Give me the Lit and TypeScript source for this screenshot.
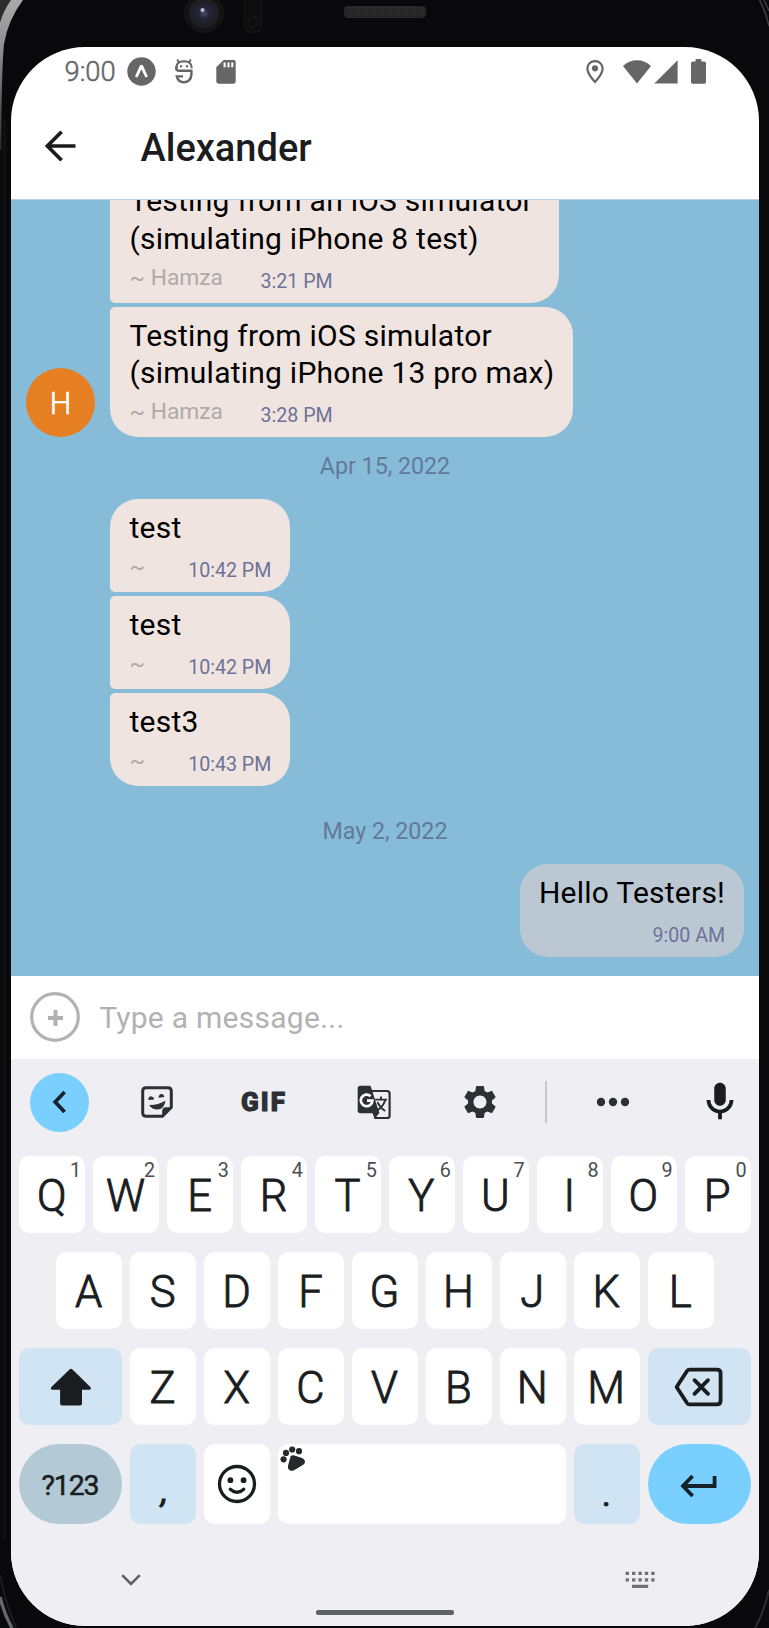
import { LitElement, html, css, svg, nothing } from "lit";
import { customElement, property } from "lit/decorators.js";
import { classMap } from "lit/directives/class-map.js";

interface Message {
  lines: string[];
  author?: string;
  time: string;
  joinTop?: boolean;
  joinBottom?: boolean;
  wrapped?: boolean;
  avatar?: string;
  mine?: boolean;
}

interface Day {
  label?: string;
  messages: Message[];
}

const days: Day[] = [
  {
    messages: [
      {
        lines: ["Testing from an iOS simulator", "(simulating iPhone 8 test)"],
        author: "~ Hamza",
        time: "3:21 PM",
        joinTop: true,
        joinBottom: true,
        wrapped: true,
      },
      {
        lines: ["Testing from iOS simulator", "(simulating iPhone 13 pro max)"],
        author: "~ Hamza",
        time: "3:28 PM",
        joinTop: true,
        avatar: "H",
      },
    ],
  },
  {
    label: "Apr 15, 2022",
    messages: [
      { lines: ["test"], author: "~ ", time: "10:42 PM", joinBottom: true },
      { lines: ["test"], author: "~ ", time: "10:42 PM", joinTop: true, joinBottom: true },
      { lines: ["test3"], author: "~ ", time: "10:43 PM", joinTop: true },
    ],
  },
  {
    label: "May 2, 2022",
    messages: [{ lines: ["Hello Testers!"], time: "9:00 AM", mine: true }],
  },
];

@customElement("status-bar")
export class StatusBar extends LitElement {
  static styles = css`
    :host { display: flex; align-items: center; height: 49px; padding: 0 53px 0 53.5px; color: #666; }
    .clock { font-size: 27.3px; line-height: 32px; font-weight: 300; -webkit-text-stroke: 0.5px #666; width: 62.5px; padding-top: 1.5px; }
    svg { display: block; flex: none; }
    .bridge { margin-left: 19px; }
    .card { margin-left: 23px; }
    .grow { flex: 1; }
    .wifi { margin-left: 19px; }
    .signal { margin-left: 3px; }
    .battery { margin-left: 13.5px; }
  `;
  render() {
    return html`
      <span class="clock">9:00</span>
      <svg width="29" height="29" viewBox="0 0 29 29">
        <circle cx="14.5" cy="14.5" r="14.2" fill="#666" />
        <path d="M8 19.6 L12.7 8.8 Q14.4 6.6 16.1 8.8 L20.9 19.6 L18.4 20.6 L14.4 12.2 L10.4 20.6Z" fill="#fff" />
      </svg>
      <svg class="bridge" width="18" height="25" viewBox="0 0 18 25" fill="none" stroke="#666">
        <path d="M1.4 11.6 V8 Q1.6 2.4 9 2.2 Q16.3 2.4 16.6 8 V9.2" stroke-width="2.1" />
        <path d="M2.2 .5 L4 3.6 M15.8 .5 L14 3.6" stroke-width="1.9" />
        <path d="M1.4 7 V9 Q1.4 11.7 4 11.7 H16.4 V16 Q15.6 22.9 9 23.2 Q3 22.9 1.8 17.4 H8" stroke-width="2.4" />
        <circle cx="6" cy="7.3" r="1.2" fill="#666" stroke="none" />
        <circle cx="12" cy="7.3" r="1.2" fill="#666" stroke="none" />
      </svg>
      <svg class="card" width="20" height="24" viewBox="0 0 20 24">
        <path d="M7.5 0 H17.6 Q19.7 0 19.7 2.1 V21.6 Q19.7 23.7 17.6 23.7 H2.4 Q.3 23.7 .3 21.6 V7.2Z" fill="#666" />
        <path d="M8.6 2.4V7.2M12.5 2.4V7.2M16.3 2.4V7.2" stroke="#fff" stroke-width="2.1" />
      </svg>
      <span class="grow"></span>
      <svg width="18" height="24" viewBox="0 0 18 24">
        <path d="M9 1.2 C4.6 1.2 1.4 4.4 1.4 8.6 C1.4 14 9 22 9 22 S16.6 14 16.6 8.6 C16.6 4.4 13.4 1.2 9 1.2Z" fill="none" stroke="#666" stroke-width="2.2" />
        <circle cx="9" cy="8.3" r="3.1" fill="#666" />
      </svg>
      <svg class="wifi" width="28" height="24" viewBox="0 0 28 24">
        <path d="M14 23.6 L0 6.1 Q6 .3 14 .3 T28 6.1Z" fill="#666" />
      </svg>
      <svg class="signal" width="24" height="24" viewBox="0 0 24 24">
        <path d="M23.6 .3 V23.6 H.3Z" fill="#666" />
      </svg>
      <svg class="battery" width="15" height="25" viewBox="0 0 15 25">
        <path d="M4.6 0 H10.4 V2.4 H13.3 Q15 2.4 15 4.1 V23 Q15 24.7 13.3 24.7 H1.7 Q0 24.7 0 23 V4.1 Q0 2.4 1.7 2.4 H4.6Z" fill="#666" />
      </svg>
    `;
  }
}

@customElement("chat-header")
export class ChatHeader extends LitElement {
  @property() name = "";
  static styles = css`
    :host { display: flex; align-items: center; height: 103px; box-sizing: border-box; padding: 0 0 3px 34px; }
    svg { display: block; margin-right: 64.5px; }
    .name { font-size: 38px; line-height: 46px; font-weight: 500; color: #1c1c1e; padding-top: 4px; }
  `;
  render() {
    return html`
      <svg width="31" height="32" viewBox="0 0 31 32" fill="none" stroke="#1c1c1e" stroke-width="3.7">
        <path d="M30.5 16 H3 M16.6 1.8 L2.4 16 L16.6 30.2" />
      </svg>
      <span class="name">${this.name}</span>
    `;
  }
}

@customElement("chat-message")
export class ChatMessage extends LitElement {
  @property({ attribute: false }) message!: Message;
  static styles = css`
    :host { display: block; }
    .row { display: flex; align-items: flex-end; }
    .row.mine { justify-content: flex-end; }
    .slot { width: 69px; margin-right: 15px; flex: none; }
    .avatar { height: 69px; border-radius: 50%; background: #e67e22; color: #fff; font-size: 30.5px; font-weight: 300; -webkit-text-stroke: 0.6px #fff; line-height: 72px; text-align: center; }
    .bubble { background: #f0e4e0; border-radius: 28px; padding: 10.3px 18.9px 0 19.5px; color: #000; }
    .wrapped { min-width: 411px; }
    .mine .bubble { background: #bbc8d4; padding-left: 19.2px; }
    .join-top { border-top-left-radius: 5px; }
    .join-bottom { border-bottom-left-radius: 5px; }
    .line { font-size: 30px; line-height: 37.5px; letter-spacing: 0.24px; white-space: nowrap; }
    .meta { display: flex; gap: 37.5px; height: 45.5px; box-sizing: border-box; padding-top: 7.5px; }
    .mine .meta { justify-content: flex-end; }
    .author { font-size: 22.8px; line-height: 26px; color: #afaaaa; white-space: pre; }
    .time { font-size: 19.6px; line-height: 22px; margin-top: 5.8px; color: #6b7399; white-space: nowrap; }
  `;
  render() {
    const m = this.message;
    return html`
      <div class=${classMap({ row: true, mine: !!m.mine })}>
        ${m.mine
          ? nothing
          : html`<div class="slot">${m.avatar ? html`<div class="avatar">${m.avatar}</div>` : nothing}</div>`}
        <div class=${classMap({ bubble: true, wrapped: !!m.wrapped, "join-top": !!m.joinTop, "join-bottom": !!m.joinBottom })}>
          ${m.lines.map((l) => html`<div class="line">${l}</div>`)}
          <div class="meta">
            ${m.author ? html`<span class="author">${m.author}</span>` : nothing}
            <span class="time">${m.time}</span>
          </div>
        </div>
      </div>
    `;
  }
}

@customElement("chat-thread")
export class ChatThread extends LitElement {
  static styles = css`
    :host { display: flex; flex-direction: column; justify-content: flex-end; height: 777px; box-sizing: border-box; padding: 0 15px 18.6px; overflow: hidden; background: #87bcd8; border-top: 1px solid #b4d3e3; }
    .day { display: flex; flex-direction: column; gap: 3.7px; flex: none; }
    .date { font-size: 23.2px; line-height: 28px; text-align: center; color: #62799c; padding: 14.9px 0 15.1px; }
    .day:last-child .date { padding-top: 31px; }
  `;
  render() {
    return days.map(
      (d) => html`<div class="day">
        ${d.label ? html`<div class="date">${d.label}</div>` : nothing}
        ${d.messages.map((m) => html`<chat-message .message=${m}></chat-message>`)}
      </div>`
    );
  }
}

@customElement("message-composer")
export class MessageComposer extends LitElement {
  static styles = css`
    :host { display: flex; align-items: center; height: 83px; box-sizing: border-box; padding: 0 19px 2px; background: #fff; }
    svg { display: block; margin-right: 19.2px; }
    .hint { font-size: 30px; line-height: 38px; letter-spacing: 0.26px; color: #b2b2b2; padding-top: 2px; }
  `;
  render() {
    return html`
      <svg width="50" height="50" viewBox="0 0 50 50" fill="none" stroke="#b2b2b2">
        <circle cx="25" cy="25" r="23.3" stroke-width="3.2" />
        <path d="M18 26 H33 M25.5 18 V34" stroke-width="4" />
      </svg>
      <span class="hint">Type a message...</span>
    `;
  }
}

const icons = {
  shift: svg`<svg width="42" height="38" viewBox="0 0 42 38"><path d="M19.8 1.3 Q21 .2 22.2 1.3 L40.6 19.3 Q41.6 21.6 39.4 21.8 H32 V35.6 Q32 37.5 30.1 37.5 H12 Q10.1 37.5 10.1 35.6 V21.8 H2.2 Q.2 21.6 1.2 19.3Z" fill="#1a1d20"/></svg>`,
  back: svg`<svg width="50" height="40" viewBox="0 0 50 40" fill="none" stroke="#1a1d20" stroke-width="3.8" stroke-linejoin="round"><path d="M15.5 2.6 H43 Q46.6 2.6 46.6 6.2 V33.8 Q46.6 37.4 43 37.4 H15.5 Q14 37.4 13 36 L2.6 20 L13 4 Q14 2.6 15.5 2.6Z"/><path d="M20.5 13.2 L34 26.8 M34 13.2 L20.5 26.8" stroke-linecap="round"/></svg>`,
  smile: svg`<svg width="40" height="40" viewBox="0 0 40 40" fill="none" stroke="#1a1d20"><circle cx="20" cy="20" r="17.5" stroke-width="3.3"/><circle cx="13.4" cy="16.2" r="2.9" fill="#1a1d20" stroke="none"/><circle cx="26.6" cy="16.2" r="2.9" fill="#1a1d20" stroke="none"/><path d="M13.3 25.2 Q20 31.4 26.7 25.2" stroke-width="3.3" stroke-linecap="round"/></svg>`,
  paw: svg`<svg width="26" height="26" viewBox="0 0 26 26" fill="#26282b"><circle cx="3.6" cy="13.3" r="3.1"/><circle cx="6" cy="6.9" r="3.1"/><circle cx="12.2" cy="3.5" r="3.1"/><circle cx="19" cy="5.2" r="3.1"/><path d="M10.5 10.6 Q12 8.8 14.5 9.6 L22 12 Q25.5 13.6 24.9 16.8 Q24.4 18.6 22 19.6 L13.5 24.4 Q10.5 25.6 8.8 23.6 Q7.6 22.2 8 19.8Z"/></svg>`,
  enter: svg`<svg width="38" height="24" viewBox="0 0 38 24" fill="none" stroke="#14222b" stroke-width="3.8"><path d="M34.6 2 V12 H4 M12.6 2 L3 12 L12.6 22"/></svg>`,
};

@customElement("key-cap")
export class KeyCap extends LitElement {
  @property() label = "";
  @property() hint = "";
  @property() icon = "";
  @property() kind = "";
  static styles = css`
    :host { display: block; }
    .key { height: 100%; box-sizing: border-box; display: grid; grid-template: 100% / 100%; border-radius: 10.5px; background: #fff; color: #1a1d20; }
    .key > * { grid-area: 1 / 1; place-self: center; }
    .label { font-size: 43.6px; line-height: 52px; font-weight: 300; -webkit-text-stroke: 0.9px #1a1d20; padding: 5px 1px 0 0; }
    .hinted .label { padding-top: 5px; }
    .hint { place-self: start end; font-size: 19.8px; line-height: 22px; color: #4c4e51; padding: 3.8px 4px 0 0; }
    .tint { background: #d1e4f3; }
    .pill { border-radius: 40px; }
    .grey { background: #b3c9d6; }
    .blue { background: #79d0ff; }
    .grey .label { font-size: 28.5px; font-weight: 400; -webkit-text-stroke: 0.5px #1a1d20; letter-spacing: -1.2px; line-height: 36px; padding-top: 3px; }
    .punct .label { font-size: 34px; padding-top: 20px; font-weight: 400; }
    .comma .label { font-style: italic; padding: 14px 0 0 3px; }
    .space > svg { place-self: start; margin: 2px 0 0 2px; }
    .blue > svg { margin-top: 3px; }
    svg { display: block; }
  `;
  render() {
    const cls: Record<string, boolean> = { key: true, hinted: !!this.hint };
    for (const k of this.kind.split(" ")) if (k) cls[k] = true;
    return html`<div class=${classMap(cls)}>
      ${this.label ? html`<span class="label">${this.label}</span>` : nothing}
      ${this.hint ? html`<span class="hint">${this.hint}</span>` : nothing}
      ${this.icon ? (icons as any)[this.icon] : nothing}
    </div>`;
  }
}

@customElement("soft-keyboard")
export class SoftKeyboard extends LitElement {
  static styles = css`
    :host { display: block; height: 567px; background: #eeeef3; }
    svg { display: block; }
    .tools { display: grid; grid-template-columns: 97px 98px 115px 105px 108px 23px 112px 1fr; height: 86px; margin-bottom: 11px; align-items: center; justify-items: center; }
    .collapse { width: 59px; height: 59px; border-radius: 50%; background: #79d0ff; display: grid; place-items: center; }
    .gif { font-size: 26px; line-height: 30px; font-weight: 900; letter-spacing: 2px; color: #2e2f34; -webkit-text-stroke: 1px #2e2f34; padding-left: 1px; }
    .rule { width: 2px; height: 42px; background: #c6c7cb; }
    .mic { margin-left: 12px; }
    .keys { display: grid; grid-template-rows: 77px 77px 77px 80px; row-gap: 19px; padding: 0 9.4px 0 8px; }
    .row { display: flex; gap: 8.15px; justify-content: center; }
    .row > * { flex: none; width: 65.8px; }
    .row > .wide { width: 102.9px; }
    .row > .bar { width: 287.9px; }
    .nav { display: flex; align-items: center; justify-content: space-between; height: 20px; padding: 0 104.5px 0 110px; margin-top: 46px; }
    .home { width: 138px; height: 4.5px; border-radius: 2px; background: #606164; margin: 20px auto 0; }
  `;
  render() {
    return html`
      <div class="tools">
        <div class="collapse">
          <svg width="16" height="24" viewBox="0 0 16 24" fill="none" stroke="#17252e" stroke-width="3.8"><path d="M12.6 2 L3.2 12 L12.6 22" /></svg>
        </div>
        <svg width="34" height="34" viewBox="0 0 34 34" fill="none" stroke="#2e2f34" stroke-width="3">
          <path d="M6 2.7 H28 Q31.3 2.7 31.3 6 V22.4 L22.4 31.3 H6 Q2.7 31.3 2.7 28 V6 Q2.7 2.7 6 2.7Z" />
          <path d="M22.2 31.5 V26 Q22.2 22.2 26 22.2 H31.5Z" fill="#2e2f34" stroke="none" />
          <path d="M8.2 15 Q8.8 10.8 11.6 11.4 Q14.2 11.8 14.2 14.4Z M18.4 12.8 Q19 8.6 21.8 9 Q24.4 9.4 24.4 12Z" fill="#2e2f34" stroke="none" />
          <path d="M9.2 20 Q18 20.2 25.4 15.8 Q24.6 23.8 18 24.6 Q12 24.8 9.2 20Z" fill="#2e2f34" stroke="none" />
        </svg>
        <span class="gif">GIF</span>
        <svg width="34" height="35" viewBox="0 0 34 35" fill="none">
          <path d="M14 6 H30 Q32.6 6 32.6 8.6 V30.4 Q32.6 33 30 33 H18.5Z" stroke="#2e2f34" stroke-width="2.2" />
          <path d="M3.5 .8 H13.5 L22.4 28.3 H3.5 Q.7 28.3 .7 25.5 V3.6 Q.7 .8 3.5 .8Z" fill="#2e2f34" />
          <path d="M15.5 28 H22.3 L17.6 33.8Z" fill="#2e2f34" />
          <path d="M13.6 11.2 A5.8 5.8 0 1 0 15.4 15.6 H10" stroke="#fff" stroke-width="2.7" />
          <path d="M18.2 14.6 H30 M24 11.6 V14.6 M28.4 14.6 Q26.6 21.4 20.4 25.4 M20.4 17.2 Q23.2 23 28.2 26" stroke="#2e2f34" stroke-width="1.9" />
        </svg>
        <svg width="40" height="40" viewBox="0 0 24 24" fill="#2e2f34">
          <path d="M19.14 12.94c.04-.3.06-.61.06-.94s-.02-.64-.07-.94l2.03-1.58c.18-.14.23-.41.12-.61l-1.92-3.32c-.12-.22-.37-.29-.59-.22l-2.39.96c-.5-.38-1.03-.7-1.62-.94l-.36-2.54c-.04-.24-.24-.41-.48-.41h-3.84c-.24 0-.43.17-.47.41l-.36 2.54c-.59.24-1.13.57-1.62.94l-2.39-.96c-.22-.08-.47 0-.59.22L2.74 8.87c-.12.21-.08.47.12.61l2.03 1.58c-.05.3-.09.63-.09.94s.02.64.07.94l-2.03 1.58c-.18.14-.23.41-.12.61l1.92 3.32c.12.22.37.29.59.22l2.39-.96c.5.38 1.03.7 1.62.94l.36 2.54c.05.24.24.41.48.41h3.84c.24 0 .44-.17.47-.41l.36-2.54c.59-.24 1.13-.56 1.62-.94l2.39.96c.22.08.47 0 .59-.22l1.92-3.32c.12-.22.07-.47-.12-.61l-2.01-1.58zM12 15.9c-2.15 0-3.9-1.75-3.9-3.9s1.75-3.9 3.9-3.9 3.9 1.75 3.9 3.9-1.75 3.9-3.9 3.9z" />
        </svg>
        <span class="rule"></span>
        <svg width="34" height="10" viewBox="0 0 34 10" fill="#2e2f34"><circle cx="5" cy="5" r="4.2" /><circle cx="17" cy="5" r="4.2" /><circle cx="29" cy="5" r="4.2" /></svg>
        <svg class="mic" width="46" height="46" viewBox="0 0 24 24" fill="#1a1d20">
          <path d="M12 14c1.66 0 3-1.34 3-3V5c0-1.66-1.34-3-3-3S9 3.34 9 5v6c0 1.66 1.34 3 3 3zm5-3c0 2.76-2.24 5-5 5s-5-2.24-5-5H5c0 3.53 2.61 6.43 6 6.92V21h2v-3.08c3.39-.49 6-3.39 6-6.92h-2z" />
        </svg>
      </div>
      <div class="keys">
        <div class="row">${[..."QWERTYUIOP"].map((k, i) => html`<key-cap label=${k} hint=${String((i + 1) % 10)}></key-cap>`)}</div>
        <div class="row">${[..."ASDFGHJKL"].map((k) => html`<key-cap label=${k}></key-cap>`)}</div>
        <div class="row">
          <key-cap class="wide" kind="tint" icon="shift"></key-cap>
          ${[..."ZXCVBNM"].map((k) => html`<key-cap label=${k}></key-cap>`)}
          <key-cap class="wide" kind="tint" icon="back"></key-cap>
        </div>
        <div class="row">
          <key-cap class="wide" kind="pill grey" label="?123"></key-cap>
          <key-cap kind="tint punct comma" label=","></key-cap>
          <key-cap icon="smile"></key-cap>
          <key-cap class="bar" kind="space" icon="paw"></key-cap>
          <key-cap kind="tint punct" label="."></key-cap>
          <key-cap class="wide" kind="pill blue" icon="enter"></key-cap>
        </div>
      </div>
      <div class="nav">
        <svg width="20" height="14" viewBox="0 0 20 14" fill="none" stroke="#606164" stroke-width="2.6"><path d="M1.2 2.2 L10 11 L18.8 2.2" /></svg>
        <svg width="30" height="18" viewBox="0 0 30 18" fill="none" stroke="#707174" stroke-width="3.2">
          <path d="M.6 2.4 H30 M.6 8.8 H30" stroke-dasharray="3.4 3" />
          <path d="M7 15.4 H23.2" />
        </svg>
      </div>
      <div class="home"></div>
    `;
  }
}

@customElement("device-bezel")
export class DeviceBezel extends LitElement {
  static styles = css`
    :host { display: block; }
    svg { display: block; }
  `;
  render() {
    return html`
      <svg width="769" height="1628" viewBox="0 0 769 1628" fill="none">
        <defs>
          <linearGradient id="rim" x1="0" y1="0" x2="0" y2="1">
            <stop offset="0" stop-color="#a9a9a9" />
            <stop offset="0.35" stop-color="#8c8c8c" />
            <stop offset="1" stop-color="#2a2b30" />
          </linearGradient>
          <radialGradient id="lens">
            <stop offset="0" stop-color="#4c4a6c" />
            <stop offset="0.4" stop-color="#252338" />
            <stop offset="1" stop-color="#1c1c1e" />
          </radialGradient>
          <pattern id="mesh" width="2" height="2" patternUnits="userSpaceOnUse">
            <rect width="2" height="2" fill="#2c2c2c" />
            <rect width="1" height="1" fill="#191919" />
          </pattern>
        </defs>
        <rect width="769" height="1628" fill="#09090b" />
        <path d="M0 0 H12 L0 20Z" fill="#2c2c2c" />
        <path d="M11 0 H23 Q8 20 4 44 Q1.6 66 1.2 150 H0 V22 Q4 10 11 0Z" fill="url(#rim)" />
        <path d="M4.5 120 V1540" stroke="#100f12" stroke-width="4" />
        <path d="M759.5 0 Q766 12 769 26 M764 0 L769 11" stroke="#3c3c3e" stroke-width="1.6" />
        <path d="M0 1597 Q4 1614 12 1628" stroke="#66686c" stroke-width="3.4" />
        <path d="M0 1575 Q6 1606 16 1628" stroke="#1c1d22" stroke-width="2" />
        <path d="M769 1590 Q764 1612 755 1628" stroke="#2c2d31" stroke-width="2" />
        <circle cx="204" cy="13" r="20" fill="#131314" />
        <circle cx="204" cy="13" r="14" fill="url(#lens)" stroke="#222224" stroke-width="1.5" />
        <circle cx="202.5" cy="10" r="2" fill="#b9b9cf" />
        <rect x="244.5" y="-12" width="17" height="44" rx="6" fill="#0d0d0e" stroke="#151516" stroke-width="1.5" />
        <circle cx="253" cy="22" r="5" stroke="#171718" stroke-width="1.5" />
        <rect x="344" y="6" width="82" height="12" rx="4" fill="url(#mesh)" />
      </svg>
    `;
  }
}

@customElement("app-root")
export class AppRoot extends LitElement {
  static styles = css`
    :host { display: grid; width: 769px; height: 1628px; overflow: hidden; font-family: Roboto, "Noto Sans", sans-serif; }
    device-bezel, .screen { grid-area: 1 / 1; }
    .screen { margin: 47px 10px 2px 11px; background: #fff; border-radius: 74px; overflow: hidden; isolation: isolate; }
  `;
  render() {
    return html`
      <device-bezel></device-bezel>
      <div class="screen">
        <status-bar></status-bar>
        <chat-header name="Alexander"></chat-header>
        <chat-thread></chat-thread>
        <message-composer></message-composer>
        <soft-keyboard></soft-keyboard>
      </div>
    `;
  }
}
